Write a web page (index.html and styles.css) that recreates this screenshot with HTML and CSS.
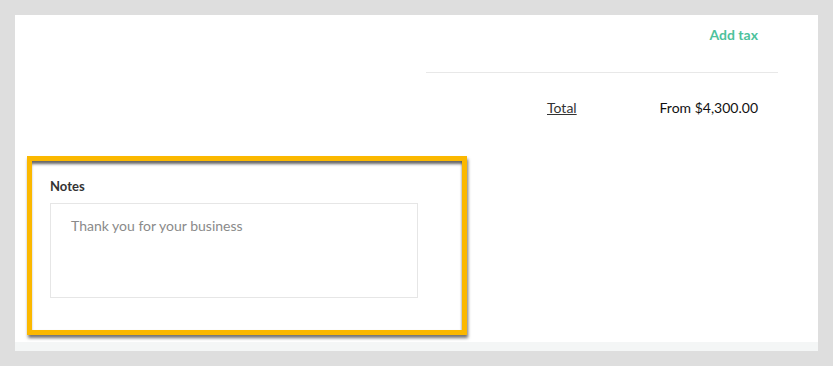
FILE: index.html
```html
<!DOCTYPE html>
<html lang="en">
  <head>
    <meta charset="UTF-8" />
    <meta name="viewport" content="width=device-width, initial-scale=1.0" />
    <title>Invoice notes</title>
    <link rel="stylesheet" href="styles.css">
  </head>
  <body>
    <div class="sheet">
      <div class="totals">
        <div class="tax-row">
          <a class="add-tax" href="#">Add tax</a>
        </div>
        <div class="total-row">
          <span class="total-label">Total</span>
          <span class="total-value">From $4,300.00</span>
        </div>
      </div>
      <div class="notes-card">
        <label class="notes-label" for="notes">Notes</label>
        <textarea id="notes" class="notes-input" placeholder="Thank you for your business"></textarea>
      </div>
    </div>
    <div class="sheet-foot"></div>
  </body>
</html>
```

FILE: styles.css
```css
body {
  margin: 0;
  padding: 15px;
  background-color: #dedede;
  font-family: Lato, "Open Sans", sans-serif;
  font-size: 14px;
  color: #222;
}
.sheet {
  width: 803px;
  height: 327px;
  background-color: #fff;
  overflow: hidden;
}
.sheet-foot {
  width: 803px;
  height: 9px;
  background-color: #f4f6f6;
}
.totals {
  width: 352px;
  margin-left: auto;
  margin-right: 40px;
}
.tax-row {
  height: 47px;
  padding-top: 10px;
  padding-right: 20px;
  text-align: right;
  line-height: 20px;
  border-bottom: 1px solid #e8e8e8;
}
.add-tax {
  color: #4dc29c;
  font-weight: 700;
  text-decoration: none;
}
.total-row {
  display: flex;
  justify-content: space-between;
  margin-top: 25px;
  padding-left: 121px;
  padding-right: 20px;
  line-height: 20px;
}
.total-label {
  color: #333;
  text-decoration: underline;
}
.total-value {
  color: #111;
}
.notes-card {
  width: 430px;
  height: 169px;
  margin-top: 38px;
  margin-left: 12px;
  border: 5px solid #fbb800;
  box-shadow: 1px 3px 3px rgba(0, 0, 0, 0.55), inset 0 4px 3px -1px rgba(0, 0, 0, 0.6), inset -2px 0 2px -1px rgba(0, 0, 0, 0.15);
  display: flex;
  flex-direction: column;
  align-items: flex-start;
}
.notes-label {
  margin-top: 16px;
  margin-left: 18px;
  font-size: 13px;
  font-weight: 700;
  line-height: 18px;
  color: #333;
}
.notes-input {
  box-sizing: border-box;
  width: 368px;
  height: 95px;
  margin-top: 8px;
  margin-left: 18px;
  padding: 12px 20px;
  border: 1px solid #e6e6e6;
  font-family: Lato, "Open Sans", sans-serif;
  font-size: 14px;
  line-height: 20px;
  resize: none;
  outline: none;
}
.notes-input::placeholder {
  color: #8a8a8a;
}
```
